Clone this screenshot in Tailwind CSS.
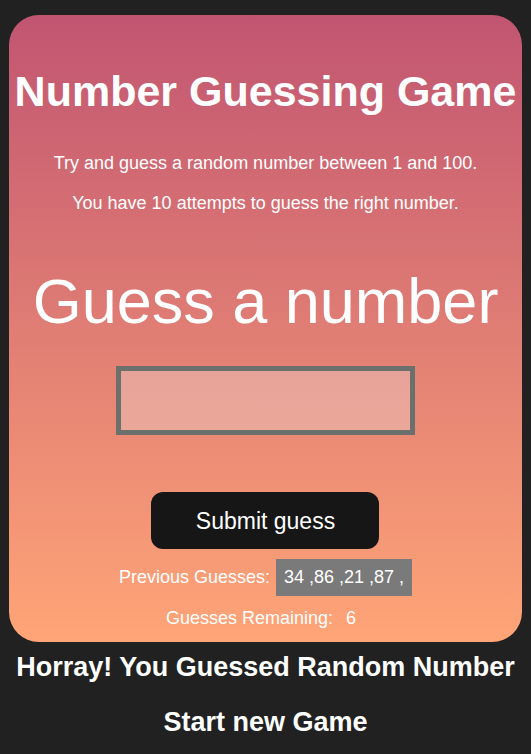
<!DOCTYPE html>
<html lang="en">
<head>
<meta charset="utf-8">
<meta name="viewport" content="width=device-width, initial-scale=1">
<title>Number Guessing Game</title>
<script src="https://cdn.jsdelivr.net/npm/@tailwindcss/browser@4"></script>
</head>
<body class="bg-[#212121] px-[9px] pt-[15px] text-center font-['Liberation_Sans',Arial,sans-serif] text-[18px] leading-[22px] text-white">
  <main class="flex flex-col items-center rounded-[30px] bg-linear-to-b/srgb from-[#c15571] to-[#ffa577] pt-[51px] pb-[13px]">
    <h1 class="text-[43px] leading-[50px] font-bold whitespace-nowrap">Number Guessing Game</h1>
    <p class="mt-[36px]">Try and guess a random number between 1 and 100.</p>
    <p class="mt-[18px]">You have 10 attempts to guess the right number.</p>
    <form class="mt-[50px] flex flex-col items-center" onsubmit="return false">
      <label for="guess" class="text-[63px] leading-[74px] whitespace-nowrap">Guess a number</label>
      <input id="guess" type="text" autocomplete="off" class="mt-[28px] h-[69px] w-[299px] border-5 border-[#6c706d] bg-[#f0f0f0]/30 bg-clip-padding px-2 text-center text-[43px] outline-none">
      <button type="submit" class="mt-[57px] h-[57px] w-[228px] rounded-[12px] bg-[#161616] text-[23px]">Submit guess</button>
    </form>
    <p class="mt-[10px] flex items-baseline gap-[6px]">Previous Guesses: <output class="bg-[#7a7a7a] px-[8px] py-[8px] leading-[21px]">34 ,86 ,21 ,87 ,</output></p>
    <p class="mt-[11px] flex">Guesses Remaining: <output class="pr-[9px] pl-[13px]">6</output></p>
  </main>
  <section class="flex flex-col items-center gap-[23px] pt-[9px]">
    <h2 class="text-[27px] leading-8 font-bold whitespace-nowrap">Horray! You Guessed Random Number</h2>
    <button type="button" class="text-[27px] leading-8 font-bold">Start new Game</button>
  </section>
</body>
</html>
